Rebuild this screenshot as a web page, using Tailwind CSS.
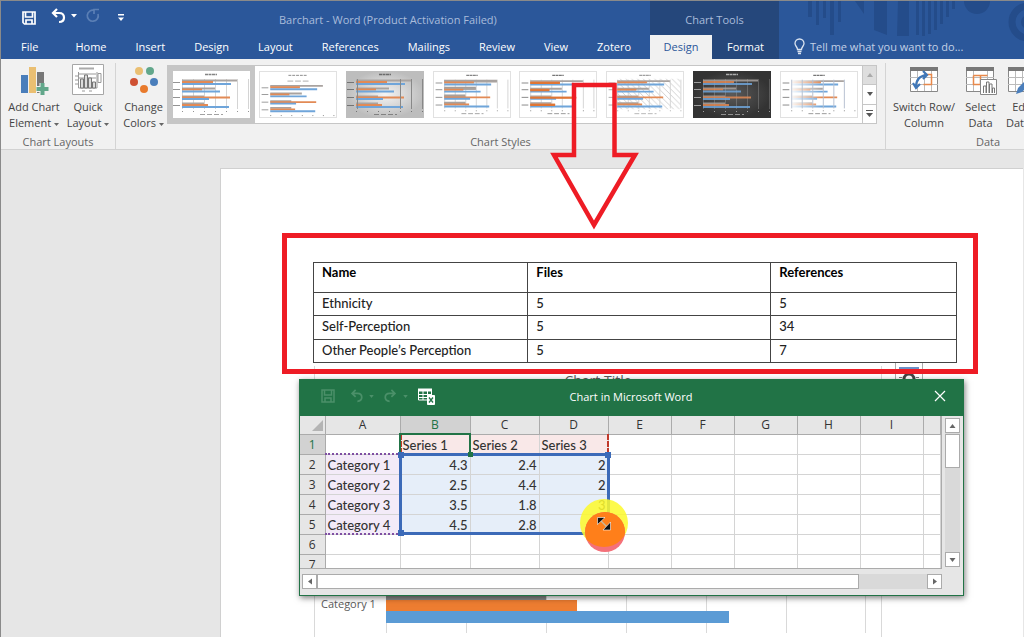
<!DOCTYPE html>
<html lang="en">
<head>
  <meta charset="UTF-8" />
  <meta name="viewport" content="width=device-width, initial-scale=1.0" />
  <title>Barchart - Word</title>
  <script src="https://cdn.jsdelivr.net/npm/@tailwindcss/browser@4"></script>
</head>

<body class="h-screen flex flex-col overflow-hidden bg-[#e6e6e6] font-['Open_Sans','Noto_Sans',sans-serif] text-[11px] font-medium leading-4 text-[#444444] border-l border-t border-[#8a8a8a]">

  <!-- Shared drawings -->
  <svg class="hidden">
    <symbol id="grid" viewBox="0 0 78 47">
      <path d="M10.500 8v30M21.500 8v30M32.500 8v30M43.500 8v30M54.500 8v30M65.500 8v30M76.500 8v30" stroke="#d4d4d4" fill="none" />
    </symbol>
    <symbol id="bars" viewBox="0 0 78 47">
      <path d="M10 9.500h55M10 17.500h33M10 25.500h22M10 32.500h22" stroke="#a9a3a0" stroke-width="2" />
      <path d="M10 11h31M10 18.500h20M10 26.500h48M10 34h26" stroke="#e28a55" stroke-width="2" />
      <path d="M10 13h49M10 20.500h38M10 28h27M10 36h47" stroke="#6fa5da" stroke-width="2" />
    </symbol>
    <symbol id="marks" viewBox="0 0 78 47">
      <path d="M33 3.500h12" stroke="currentColor" stroke-width="1.500" stroke-dasharray="3 .5" opacity=".8" />
      <path d="M1 11.500h7M1 18.500h7M1 26.500h7M1 34.500h7" stroke="currentColor" opacity=".7" />
      <path d="M28 43.500h23" stroke="currentColor" stroke-dasharray="5 2" opacity=".6" />
      <path d="M10 40.500h67" stroke="currentColor" stroke-dasharray="1 10" opacity=".7" />
    </symbol>
    <symbol id="caret" viewBox="0 0 5 3">
      <path d="M0 0h5L2.500 3z" fill="#666" />
    </symbol>
  </svg>

  <!-- Title bar and tabs -->
  <header class="relative flex h-[58px] shrink-0 bg-[#2b579a] text-white">
    <svg class="absolute right-0 top-0" width="224" height="58" viewBox="0 0 224 58" fill="#244c8a">
      <path d="M8 0h4v16H8zM16 0h3v24h-3zM23 0h3v17h-3zM30 0h4v34h-4zM38 0h3v21h-3zM55 0h9v13zM74 0h13v34L74 29zM98 0h11v35H97zM116 0h3v34h-3zM122 0h3v35h-3zM128 0h3v33h-3zM134 0h3v29h-3zM140 0h3v23h-3zM146 0h3v16h-3zM152 0h3v8h-3z" />
      <circle cx="177" cy="0" r="13" />
      <circle cx="228" cy="21" r="16" fill="none" stroke="#244c8a" stroke-width="7" />
      <circle cx="228" cy="21" r="7" />
    </svg>

    <div class="w-[649px] shrink-0 flex flex-col">
      <div class="flex h-[33px] items-center pl-5">
        <button aria-label="Save"><svg width="16" height="16" viewBox="0 0 16 16" fill="none" stroke="#fff" stroke-width="1.700"><path d="M2 2h12v12H3.500L2 12.500zM4.500 2v5h7V2M5 14v-4h6v4" /></svg></button>
        <button aria-label="Undo" class="-mt-1 ml-3 flex items-center gap-1">
          <svg width="18" height="16" viewBox="0 0 16 16" fill="none" stroke="#fff" stroke-width="2.200"><path d="M7 1 3 5l4 4M3 5h6c3 0 5 1.500 5 4.500S12 14 9 14" /></svg>
          <svg width="6" height="4" viewBox="0 0 6 4" fill="#fff"><path d="M0 0h6L3 3.500z" /></svg>
        </button>
        <button aria-label="Repeat" class="-mt-1 ml-2"><svg width="16" height="16" viewBox="0 0 16 16" fill="none" stroke="#5b7fb5" stroke-width="1.700"><path d="M9.500 2.500A5.500 5.500 0 1 0 13 6M9 6V1.500h5" /></svg></button>
        <button aria-label="Customize toolbar" class="ml-4"><svg width="8" height="8" viewBox="0 0 8 8" fill="#fff"><path d="M1 0h6v1.500H1zM1 3.500h6L4 7z" /></svg></button>
        <span class="ml-[154px] mt-1 text-[#a9bcda]">Barchart - Word (Product Activation Failed)</span>
      </div>
      <nav class="flex h-[25px] items-center gap-[29px] pl-5">
        <a href="#" class="mr-2">File</a>
        <a href="#">Home</a>
        <a href="#">Insert</a>
        <a href="#">Design</a>
        <a href="#">Layout</a>
        <a href="#">References</a>
        <a href="#">Mailings</a>
        <a href="#">Review</a>
        <a href="#">View</a>
        <a href="#">Zotero</a>
      </nav>
    </div>

    <div class="relative w-[129px] shrink-0 flex flex-col bg-[#25477b]">
      <div class="h-[34px] pt-[11px] text-center text-[#a9bcda]">Chart Tools</div>
      <nav class="flex flex-1 items-stretch">
        <a href="#" class="w-[62px] pt-1 text-center bg-[#f1f1f1] text-[#2b579a]">Design</a>
        <a href="#" class="flex-1 pt-1 text-center">Format</a>
      </nav>
    </div>

    <div class="relative flex flex-1 items-end pb-1 pl-[14px] gap-1 text-[#c3d1e6]">
      <svg width="13" height="17" viewBox="0 0 13 17" fill="none" stroke="#dbe4f1" stroke-width="1.300"><path d="M4.500 11.500C4.500 9 2 8 2 5.500a4.500 4.500 0 0 1 9 0C11 8 8.500 9 8.500 11.500zM4.500 13.500h4M5 15.500h3" /></svg>
      <button>Tell me what you want to do...</button>
    </div>
  </header>

  <!-- Ribbon -->
  <section class="flex h-[91px] shrink-0 items-start overflow-hidden border-b border-[#d2d2d2] bg-[#f1f1f1] pt-1">
    <div class="w-[115px] h-[87px] shrink-0 flex flex-col justify-between border-r border-[#d4d4d4] text-center">
      <div class="flex">
        <button class="w-[66px] flex flex-col items-center">
          <svg width="30" height="32" viewBox="0 0 30 32"><path fill="#4a7ebb" d="M2 12h7v18H2z" /><path fill="#eabf72" d="M10 4h7v26h-7z" /><path fill="#777" d="M18 9h7v21h-7z" /><path d="M23.500 20v12M17.500 26h12" stroke="#f1f1f1" stroke-width="6" /><path d="M23.500 20v12M17.500 26h12" stroke="#62a78b" stroke-width="4" /></svg>
          <span class="mt-1 whitespace-nowrap">Add Chart<br>Element <svg class="inline align-middle" width="5" height="3"><use href="#caret" /></svg></span>
        </button>
        <button class="w-[42px] flex flex-col items-center">
          <svg width="32" height="32" viewBox="0 0 32 32" fill="none" stroke="#777"><path fill="#fff" stroke="#a6a6a6" d="M.5 1.500h31v30H.5z" /><path d="M7 5.500h15" stroke-width="2" stroke="#aaa" /><path d="M6.500 9v16H25V9M3 13h3M3 17h3M3 21h3M10 28h3M17 28h3M26 10.500h3v9h-3zM7 11h17M7 15h17" stroke="#999" /><path fill="#ddd" d="M8.500 25V16h3v9zM12.500 25V12h3v13zM16.500 25V15h3v10zM20.500 25v-6h3v6z" /></svg>
          <span class="mt-1 whitespace-nowrap">Quick<br>Layout <svg class="inline align-middle" width="5" height="3"><use href="#caret" /></svg></span>
        </button>
      </div>
      <div class="text-[#666]">Chart Layouts</div>
    </div>

    <div class="w-[770px] h-[87px] shrink-0 flex flex-col justify-between border-r border-[#d4d4d4]">
      <div class="flex">
        <button class="w-[51px] pl-1 flex flex-col items-center">
          <svg width="30" height="32" viewBox="0 0 30 32"><circle cx="10" cy="8" r="4" fill="#eabf72" /><circle cx="21" cy="8" r="4" fill="#62a78b" /><circle cx="5" cy="19" r="4" fill="#cf5133" /><circle cx="25" cy="19" r="4" fill="#4a7ebb" /><circle cx="15" cy="26" r="4" fill="#e87a2c" /></svg>
          <span class="mt-1 whitespace-nowrap">Change<br>Colors <svg class="inline align-middle" width="5" height="3"><use href="#caret" /></svg></span>
        </button>
        <div class="mt-[2px] flex h-[59px] border border-[#c6c6c6] bg-white">
          <div class="grid w-[694px] grid-cols-8">
            <button aria-label="Style 1" class="flex items-center justify-center border-[5px] border-[#c6c6c6] bg-white text-[#666]"><svg width="78" height="47" class="shrink-0"><use href="#grid" /><use href="#bars" /><use href="#marks" /></svg></button>
            <button aria-label="Style 2" class="flex items-center justify-center"><svg width="78" height="47" class="border border-[#e1e1e1]" viewBox="0 0 78 47"><path d="M28 9.500h24" stroke="#aaa" stroke-dasharray="6 2" /><use href="#bars" y="5" /><path d="M29 3.500h20" stroke="#888" stroke-dasharray="3 1" /><path d="M1 16.500h7M1 23.500h7M1 31.500h7M1 39.500h7" stroke="#999" /><path d="M10 45.500h67" stroke="#888" stroke-dasharray="1 10" /></svg></button>
            <button aria-label="Style 3" class="flex items-center justify-center text-[#555]"><svg width="78" height="47" viewBox="0 0 78 47"><defs><radialGradient id="g3"><stop offset="0" stop-color="#f4f4f4" /><stop offset="1" stop-color="#bdbdbd" /></radialGradient></defs><path fill="url(#g3)" d="M0 0h78v47H0z" /><use href="#bars" /><use href="#marks" /><path d="M11.500 8v30M54.500 8v30M65.500 8v30M76.500 8v30" stroke="#888" /></svg></button>
            <button aria-label="Style 4" class="flex items-center justify-center text-[#666]"><svg width="78" height="47" viewBox="0 0 78 47" class="border border-[#e1e1e1]"><use href="#grid" /><path d="M10 8h55v3H10zM10 15.500h33v3H10zM10 23.500h22v3H10zM10 31h22v3H10z" fill="#a39c98" /><use href="#bars" /><use href="#marks" /></svg></button>
            <button aria-label="Style 5" class="flex items-center justify-center text-[#555]"><svg width="78" height="47" viewBox="0 0 78 47" class="border border-[#e1e1e1]"><use href="#grid" /><use href="#bars" /><path d="M10 11.500h31M10 19h20M10 27h48M10 34.500h26" stroke="#e07634" stroke-width="2" /><use href="#marks" /></svg></button>
            <button aria-label="Style 6" class="flex items-center justify-center text-[#888]"><svg width="78" height="47" viewBox="0 0 78 47" class="border border-[#e1e1e1]"><defs><pattern id="hatch" width="6" height="6" patternUnits="userSpaceOnUse"><path d="M0 0l6 6" stroke="#d0d0d0" /></pattern></defs><path fill="url(#hatch)" d="M10 7h66v32H10z" /><use href="#grid" /><use href="#bars" /><use href="#marks" /></svg></button>
            <button aria-label="Style 7" class="flex items-center justify-center text-[#ccc]"><svg width="78" height="47" viewBox="0 0 78 47"><defs><radialGradient id="g7"><stop offset="0" stop-color="#5a5a5a" /><stop offset="1" stop-color="#333" /></radialGradient></defs><path fill="url(#g7)" d="M0 0h78v47H0z" /><use href="#grid" opacity=".25" /><use href="#bars" opacity=".85" /><use href="#marks" /></svg></button>
            <button aria-label="Style 8" class="flex items-center justify-center text-[#555]"><svg width="78" height="47" viewBox="0 0 78 47" class="border border-[#e1e1e1]"><defs><linearGradient id="g8"><stop offset="0" stop-color="#fff" /><stop offset="1" stop-color="#fff" stop-opacity="0" /></linearGradient></defs><use href="#bars" /><path fill="url(#g8)" d="M8 8h34v30H8z" /><path d="M10.500 8v30M21.500 8v30M32.500 8v30M43.500 8v30M54.500 8v30M65.500 8v30" stroke="#b5bfd0" /><use href="#marks" /></svg></button>
          </div>
          <div class="flex w-[14px] flex-col border-l border-[#c6c6c6]">
            <button aria-label="Previous row" class="flex flex-1 items-center justify-center bg-[#dedede]"><svg width="6" height="4" viewBox="0 0 6 4" fill="#aaa"><path d="M0 4h6L3 0z" /></svg></button>
            <button aria-label="Next row" class="flex flex-1 items-center justify-center border-y border-[#c6c6c6]"><svg width="6" height="4" viewBox="0 0 6 4" fill="#555"><path d="M0 0h6L3 4z" /></svg></button>
            <button aria-label="More styles" class="flex flex-1 items-center justify-center"><svg width="7" height="7" viewBox="0 0 7 7" fill="#555"><path d="M0 0h7v1H0zM0 3h7L3.500 7z" /></svg></button>
          </div>
        </div>
      </div>
      <div class="text-center text-[#666]">Chart Styles</div>
    </div>

    <div class="h-[87px] shrink-0 flex flex-col justify-between">
      <div class="flex">
        <button class="w-[76px] flex flex-col items-center">
          <svg width="30" height="32" viewBox="0 0 30 32" fill="none"><path fill="#fff" stroke="#888" d="M1.500 5.500h27v23h-27z" /><path d="M1 6h28" stroke="#777" stroke-width="4" /><path d="M1 14.500h28M1 21.500h28M8.500 8v20M15.500 8v20M22.500 8v20" stroke="#bbb" /><path d="M15.500 11.500h7v10h-8" stroke="#e8884a" stroke-width="1.500" /><path d="M7 24c0-7 3-11 10-12M4 20l3 5 4-4M14 8l4 4-4 4" stroke="#3f77b8" stroke-width="2.200" /></svg>
          <span class="mt-1 whitespace-nowrap">Switch Row/<br>Column</span>
        </button>
        <button class="w-[37px] flex flex-col items-center">
          <svg width="32" height="32" viewBox="0 0 32 32" fill="none"><path fill="#fff" stroke="#888" d="M1.500 5.500h27v23h-27z" /><path d="M1 6h28" stroke="#777" stroke-width="4" /><path d="M1 14.500h28M1 21.500h28M8.500 8v20M22.500 8v20" stroke="#bbb" /><path d="M8.500 12.500h14M8.500 12.500v9h7M15.500 12v9" stroke="#e8884a" stroke-width="1.500" /><path fill="#fff" stroke="#888" d="M15.500 16.500h16v15h-16z" /><path stroke="#777" d="M18.500 30v-7h2.500v7M21.500 30V19h2.500v11M24.500 30v-9h2.500v9M27.500 30v-5h2v5" /></svg>
          <span class="mt-1 whitespace-nowrap">Select<br>Data</span>
        </button>
        <button class="w-[46px] flex flex-col items-center">
          <svg width="30" height="32" viewBox="0 0 30 32" fill="none"><path fill="#fff" stroke="#888" d="M1.500 5.500h27v23h-27z" /><path d="M1 6h28" stroke="#777" stroke-width="4" /><path d="M1 14.500h28M1 21.500h28M8.500 8v20M15.500 8v20M22.500 8v20" stroke="#bbb" /><path d="M9 31l2-6L24 12l4 4-13 13z" fill="#4a7ebb" /></svg>
          <span class="mt-1 whitespace-nowrap">Edit<br>Data <svg class="inline align-middle" width="5" height="3"><use href="#caret" /></svg></span>
        </button>
      </div>
      <div class="pl-[90px] text-[#666]">Data</div>
    </div>
  </section>

  <!-- Document -->
  <main class="relative flex flex-1 min-h-0 pt-[18px] pl-[219px] pr-px">
    <article class="relative flex flex-1 flex-col border-l border-t border-[#d0d0d0] bg-white pt-16 pl-[61px] pr-[45px]">
      <div class="relative z-10 border-[5px] border-[#ee1c25] pt-6 pb-[6px] pl-[26px] pr-4">
        <table class="w-full table-fixed border-collapse text-[13px] leading-4 text-[#222] font-['Lato',sans-serif]">
          <colgroup><col class="w-1/3"><col class="w-[243px]"><col></colgroup>
          <thead>
            <tr class="h-[30px] text-left align-top text-black">
              <th class="border border-[#444] px-2 pt-px">Name</th>
              <th class="border border-[#444] px-2 pt-px">Files</th>
              <th class="border border-[#444] px-2 pt-px">References</th>
            </tr>
          </thead>
          <tbody>
            <tr class="h-[23px]"><td class="border border-[#444] px-2 pb-[3px]">Ethnicity</td><td class="border border-[#444] px-2 pb-[3px]">5</td><td class="border border-[#444] px-2 pb-[3px]">5</td></tr>
            <tr class="h-[24px]"><td class="border border-[#444] px-2 pb-1">Self-Perception</td><td class="border border-[#444] px-2 pb-1">5</td><td class="border border-[#444] px-2 pb-1">34</td></tr>
            <tr class="h-[23px]"><td class="border border-[#444] px-2 pb-[3px]">Other People’s Perception</td><td class="border border-[#444] px-2 pb-[3px]">5</td><td class="border border-[#444] px-2 pb-[3px]">7</td></tr>
          </tbody>
        </table>
      </div>

      <!-- Chart under the data window -->
      <figure class="ml-8 mr-[96px] -mt-2 flex flex-1 flex-col justify-between border-x border-[#d9d9d9] pb-1">
        <figcaption class="pt-[5px] text-center text-[14px] leading-5 text-[#595959]">Chart Title</figcaption>
        <div class="flex items-start">
          <span class="w-[71px] pt-[5px] pl-[6px] whitespace-nowrap font-normal text-[#595959]">Category 1</span>
          <svg width="480" height="42" viewBox="0 0 480 42"><path d="M.5 0v42M80.500 0v42M160.500 0v42M240.500 0v42M320.500 0v42M400.500 0v42M479.500 0v42" stroke="#d9d9d9" /><path fill="#8a8a8a" d="M0 0h160v9H0z" /><path fill="#ed7d31" d="M0 9h191v11H0z" /><path fill="#5b9bd5" d="M0 20h343v12H0z" /></svg>
        </div>
      </figure>
    </article>

    <!-- Layout options button -->
    <button aria-label="Layout options" class="absolute left-[894px] top-[212px] h-7 w-7 border border-[#ababab] bg-white">
      <svg width="26" height="26" viewBox="0 0 26 26" fill="none"><path d="M3 5h20" stroke="#6a8fc6" stroke-width="2" /><path d="M3 10.500h4M19 10.500h4M3 14.500h3M20 14.500h3" stroke="#777" /><path d="M8 18v-2a5 5 0 0 1 10 0v2" stroke="#444" stroke-width="3" /></svg>
    </button>

    <!-- Chart data window -->
    <section class="absolute z-20 left-[298px] top-[229px] w-[665px] h-[217px] flex flex-col border border-[#217346] bg-[#e6e6e6] shadow-[1px_2px_6px_rgba(0,0,0,0.5)]">
      <div class="flex h-9 shrink-0 items-center bg-[#217346] pl-5 pb-1 text-white">
        <div class="flex w-[200px] items-center text-[#4b9069]">
          <button aria-label="Save"><svg width="16" height="16" viewBox="0 0 16 16" fill="none" stroke="currentColor" stroke-width="1.500"><path d="M2 2h12v12H2zM4.500 2v5h7V2M5 14v-4h6v4" /></svg></button>
          <button aria-label="Undo" class="ml-3 flex items-center gap-1"><svg width="17" height="14" viewBox="0 0 16 16" fill="none" stroke="currentColor" stroke-width="2"><path d="M7 1 3 5l4 4M3 5h6c3 0 5 1.500 5 4.500S12 14 9 14" /></svg><svg width="5" height="3" viewBox="0 0 6 4" fill="currentColor"><path d="M0 0h6L3 4z" /></svg></button>
          <button aria-label="Redo" class="ml-2 flex items-center gap-1"><svg width="17" height="14" viewBox="0 0 16 16" fill="none" stroke="currentColor" stroke-width="2"><path d="M9 1l4 4-4 4M13 5H7c-3 0-5 1.500-5 4.500S4 14 7 14" /></svg><svg width="5" height="3" viewBox="0 0 6 4" fill="currentColor"><path d="M0 0h6L3 4z" /></svg></button>
          <button aria-label="Edit data in Excel" class="ml-[10px]"><svg width="17" height="17" viewBox="0 0 17 17" fill="none" stroke="#fff"><path d="M.5 2v10H10M13.500 7V2M.5 6.500h13M.5 9.500h9M5 2v10M9.500 2v6" /><path d="M0 2h14" stroke-width="3" /><path fill="#fff" d="M9.500 7.500h7v9h-7z" /><path d="M11 9.500l4 5M15 9.500l-4 5" stroke="#217346" stroke-width="1.300" /></svg></button>
        </div>
        <h2 class="flex-1 pt-[2px] text-center">Chart in Microsoft Word</h2>
        <button aria-label="Close" class="mr-[17px] ml-[192px]"><svg width="12" height="12" viewBox="0 0 12 12" stroke="#fff" stroke-width="1.200"><path d="M1 1l10 10M11 1 1 11" /></svg></button>
      </div>

      <div class="flex flex-1 min-h-0">
        <div class="relative mb-[6px] h-[153px] flex-1 overflow-hidden border-b border-r border-[#ababab]">
          <table class="w-full table-fixed border-collapse bg-white text-[#333]">
            <colgroup><col class="w-[25px]"><col class="w-[75px]"><col class="w-[70px]"><col class="w-[69px]"><col class="w-[69px]"><col class="w-[63px]"><col class="w-[63px]"><col class="w-[63px]"><col class="w-[63px]"><col class="w-[63px]"><col></colgroup>
            <thead id="columns"></thead>
            <tbody id="rows"></tbody>
          </table>
          <!-- Range outlines -->
          <div class="absolute left-[25px] top-[37px] h-[82px] w-[76px] border-y-2 border-dotted border-[#7f4fa3]"></div>
          <div class="absolute left-[100px] top-[18px] h-[20px] w-[209px] border-x-2 border-dashed border-[#c0392b]"></div>
          <div class="absolute left-[99px] top-[17px] h-[22px] w-[72px] border-2 border-[#217346]"></div>
          <div class="absolute left-[99px] top-[37px] h-[82px] w-[211px] border-[3px] border-[#3c6ab8]">
            <span class="absolute -left-1 -top-1 h-[6px] w-[6px] bg-[#3c6ab8]"></span>
            <span class="absolute -right-1 -top-1 h-[6px] w-[6px] bg-[#3c6ab8]"></span>
            <span class="absolute -left-1 -bottom-1 h-[6px] w-[6px] bg-[#3c6ab8]"></span>
            <span class="absolute -top-1 left-[66px] h-[5px] w-[5px] bg-[#217346]"></span>
          </div>
        </div>
        <div class="mx-[3px] mt-[2px] flex h-[149px] w-[15px] flex-col bg-[#d9d9d9]">
          <button aria-label="Scroll up" class="flex h-[15px] items-center justify-center border border-[#ababab] bg-white"><svg width="7" height="4" viewBox="0 0 6 4" fill="#666"><path d="M0 4h6L3 0z" /></svg></button>
          <div class="mt-px h-[34px] border border-[#ababab] bg-white"></div>
          <button aria-label="Scroll down" class="mt-auto flex h-[15px] items-center justify-center border border-[#ababab] bg-white"><svg width="7" height="4" viewBox="0 0 6 4" fill="#666"><path d="M0 0h6L3 4z" /></svg></button>
        </div>
      </div>

      <div class="mb-[6px] ml-[2px] mr-[21px] flex h-[15px] shrink-0 bg-[#d9d9d9]">
        <button aria-label="Scroll left" class="flex w-[15px] items-center justify-center border border-[#ababab] bg-white"><svg width="4" height="7" viewBox="0 0 4 6" fill="#666"><path d="M4 0v6L0 3z" /></svg></button>
        <div class="w-[542px] border border-[#ababab] bg-white"></div>
        <button aria-label="Scroll right" class="ml-auto flex w-[15px] items-center justify-center border border-[#ababab] bg-white"><svg width="4" height="7" viewBox="0 0 4 6" fill="#666"><path d="M0 0v6L4 3z" /></svg></button>
      </div>
    </section>
  </main>

  <!-- Annotations -->
  <svg class="absolute z-30 left-[550px] top-[82px]" width="90" height="150" viewBox="0 0 90 150" fill="none" stroke="#ee1c25" stroke-width="4.500"><path d="M24 73V3h40.500V73H85L44 143 4 73z" /></svg>
  <svg class="absolute z-30 left-[578px] top-[496px]" width="56" height="58" viewBox="0 0 56 58">
    <defs><clipPath id="spot"><circle cx="26" cy="27" r="24" /></clipPath></defs>
    <circle cx="26" cy="27" r="24" fill="#fdf92c" opacity=".86" />
    <circle cx="27" cy="36" r="20" fill="#f4717a" />
    <circle cx="27" cy="36" r="20" fill="#ff7f1a" clip-path="url(#spot)" />
    <path d="M22 24l8 8" stroke="#c9b89a" stroke-width="1.500" />
    <path d="M19.500 21.500h7.500l-7.500 7zM32.500 34v-8l-7.500 8z" fill="#111" stroke="#fff" stroke-width=".6" />
  </svg>

  <script>
    const data = [
      ['', 'Series 1', 'Series 2', 'Series 3'],
      ['Category 1', '4.3', '2.4', '2'],
      ['Category 2', '2.5', '4.4', '2'],
      ['Category 3', '3.5', '1.8', '3'],
      ['Category 4', '4.5', '2.8', '5'],
      [],
      []
    ];

    const corner = '<svg class="ml-auto mr-[2px]" width="11" height="11" viewBox="0 0 11 11"><path d="M11 0v11H0z" fill="#b4b4b4" /></svg>';

    document.getElementById('columns').innerHTML = '<tr class="h-[18px] bg-[#e6e6e6] text-[12px]">' +
      [corner, 'A', 'B', 'C', 'D', 'E', 'F', 'G', 'H', 'I', ''].map((c) => {
        const bg = c === 'B' ? 'bg-[#d2d2d2] text-[#217346]' : '';
        return `<th class="h-[18px] border-b border-r border-[#ababab] p-0 pt-px font-normal leading-4 ${bg}">${c}</th>`;
      }).join('') + '</tr>';

    document.getElementById('rows').innerHTML = data.map((row, r) => {
      const active = r === 0 ? 'bg-[#d2d2d2] text-[#217346]' : 'bg-[#e6e6e6]';
      let cells = `<th class="h-[20px] border-b border-r border-[#ababab] p-0 pt-px text-[12px] font-normal leading-4 ${active}">${r + 1}</th>`;
      for (let c = 0; c < 10; c++) {
        let style = '';
        if (r === 0 && c > 0 && c < 4) style = 'bg-[#f9e8e8]';
        if (r > 0 && r < 5 && c === 0) style = 'bg-[#f3ebf8]';
        if (r > 0 && r < 5 && c > 0 && c < 4) style = 'bg-[#e6eef9] text-right';
        cells += `<td class="h-[20px] whitespace-nowrap border-b border-r border-[#d4d4d4] pt-[2px] pb-0 px-[2px] text-[13px] leading-4 font-['Lato',sans-serif] ${style}">${row[c] || ''}</td>`;
      }
      return `<tr>${cells}</tr>`;
    }).join('');
  </script>
</body>
</html>
